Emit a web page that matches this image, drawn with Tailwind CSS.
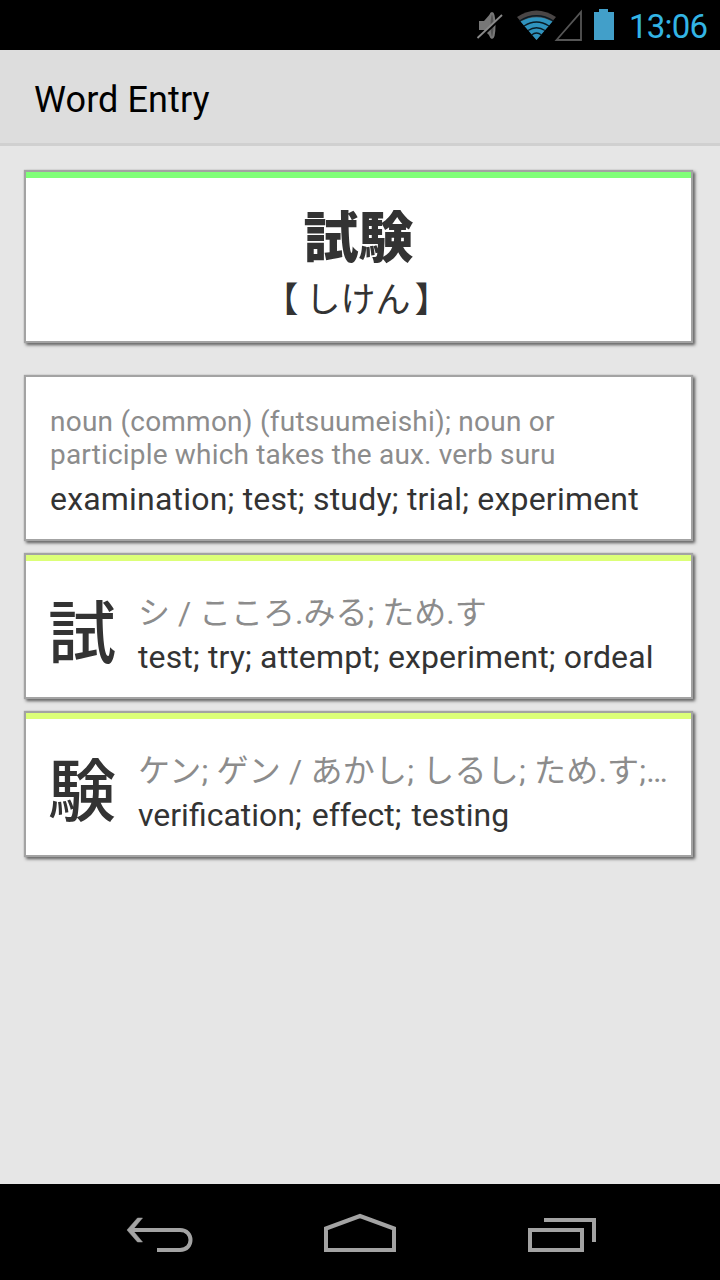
<!DOCTYPE html>
<html lang="ja">
<head>
    <meta charset="UTF-8">
    <meta name="viewport" content="width=device-width, initial-scale=1.0">
    <title>Word Entry</title>
    <script src="https://cdn.jsdelivr.net/npm/@tailwindcss/browser@4"></script>
</head>
<body class="bg-[#e6e6e6] font-['Roboto','Noto_Sans_CJK_JP',sans-serif] text-[#333]">
    <div class="flex h-[1280px] w-[720px] flex-col overflow-hidden">

        <!-- Status bar -->
        <div class="flex h-[50px] shrink-0 items-center justify-end bg-black">
            <svg class="h-[50px] w-[145px]" viewBox="474 0 145 50" fill="none">
                <path d="M479 21h5l7-8v24l-7-7h-5z" fill="#777"/>
                <ellipse cx="492" cy="25.500" rx="2.500" ry="12.500" fill="#555" stroke="#777" stroke-width="2"/>
                <path d="M478.500 39L503 16" stroke="#000" stroke-width="3"/>
                <path d="M477.500 38L502 15" stroke="#8a8a8a" stroke-width="1.800"/>
                <path d="M536.500 40L517 17Q536.500 4 556 17z" fill="#4a4646"/>
                <path d="M536.500 40L520.500 21.500Q536.500 13 552.500 21.500z" fill="#2f93be"/>
                <path d="M519.500 21Q536.500 10.500 553.500 21M524 26Q536.500 18 549 26M528 30.500Q536.500 25 545 30.500M531.500 35Q536.500 31 541.500 35" stroke="#0a1b24" stroke-width="1.300"/>
                <path d="M556.500 40L581 12V40z" stroke="#555" stroke-width="1.800"/>
                <path d="M594 12h5V9h9v3h6v28h-20z" fill="#429fc9"/>
            </svg>
            <div id="clock" class="mr-[11px] ml-[10px] w-[80px] pt-[3px] text-[33px] leading-[50px] tracking-[-0.8px] whitespace-nowrap text-[#33b5e5]">13:06</div>
        </div>

        <!-- Action bar -->
        <div class="h-24 shrink-0 border-b-3 border-[#d0d0d0] bg-[#ddd] pl-[34px]">
            <h1 class="text-4xl leading-[100px] tracking-[0.1px] text-black">Word Entry</h1>
        </div>

        <!-- Cards -->
        <main class="flex grow flex-col pt-[26px] pr-[29px] pl-[26px]">
            <section class="h-[169px] shrink-0 border-t-6 border-[#80ff78] bg-white pt-[25px] text-center shadow-[0_0_1px_2px_#a3a3a3,2px_2px_3px_2px_#555]">
                <div class="text-[55px] leading-[70px] font-black">試験</div>
                <div class="pt-[3px] pr-1 text-[35px] leading-[50px]"><span class="mr-[7px]">【</span>しけん<span class="ml-1">】</span></div>
            </section>

            <section class="mt-9 h-[162px] shrink-0 bg-white pt-7 pl-6 shadow-[0_0_1px_2px_#a3a3a3,2px_2px_3px_2px_#555]">
                <p class="text-[28px] leading-[33px] tracking-[0.23px] whitespace-nowrap text-[#8c8c8c]">noun (common) (futsuumeishi); noun or<br><span class="tracking-[0.18px]">participle which takes the aux. verb suru</span></p>
                <p class="pt-1 text-[32px] leading-[48px] tracking-[0.2px] whitespace-nowrap">examination; test; study; trial; experiment</p>
            </section>

            <section class="mt-4 flex h-[142px] shrink-0 border-t-6 border-[#dcff78] bg-white pl-[22px] shadow-[0_0_1px_2px_#a3a3a3,2px_2px_3px_2px_#555]">
                <div class="w-[90px] pt-6 text-[68px] leading-[100px] font-medium">試</div>
                <div class="whitespace-nowrap">
                    <p class="pt-7 text-[32px] leading-[48px] text-[#8c8c8c]">シ / こころ.みる; ため.す</p>
                    <p class="text-[32px] leading-[40px] tracking-[0.14px]">test; try; attempt; experiment; ordeal</p>
                </div>
            </section>

            <section class="mt-4 flex h-[142px] shrink-0 border-t-6 border-[#dcff78] bg-white pl-[22px] shadow-[0_0_1px_2px_#a3a3a3,2px_2px_3px_2px_#555]">
                <div class="w-[90px] pt-6 text-[68px] leading-[100px] font-medium">験</div>
                <div class="whitespace-nowrap">
                    <p class="pt-7 text-[32px] leading-[48px] tracking-[0.2px] text-[#8c8c8c]">ケン; ゲン / あかし; しるし; ため.す;…</p>
                    <p class="text-[32px] leading-[40px] [word-spacing:2px]">verification; effect; testing</p>
                </div>
            </section>
        </main>

        <!-- Navigation bar -->
        <nav class="h-24 shrink-0 bg-black">
            <svg class="h-24 w-[720px]" viewBox="0 1184 720 96" fill="none" stroke="#a3a3a3" stroke-width="4">
                <path d="M130 1230H180C194 1230 194 1250 180 1250H157"/>
                <path d="M127 1230L137.500 1218H142.500L132.500 1230L142.500 1242H137.500z" fill="#a3a3a3" stroke="#a3a3a3" stroke-width="0.500"/>
                <path d="M326 1250V1228.500L360 1216L394 1228.500V1250z"/>
                <path d="M530 1230h52v20h-52zM544 1220h50v22"/>
            </svg>
        </nav>
    </div>
</body>
</html>
